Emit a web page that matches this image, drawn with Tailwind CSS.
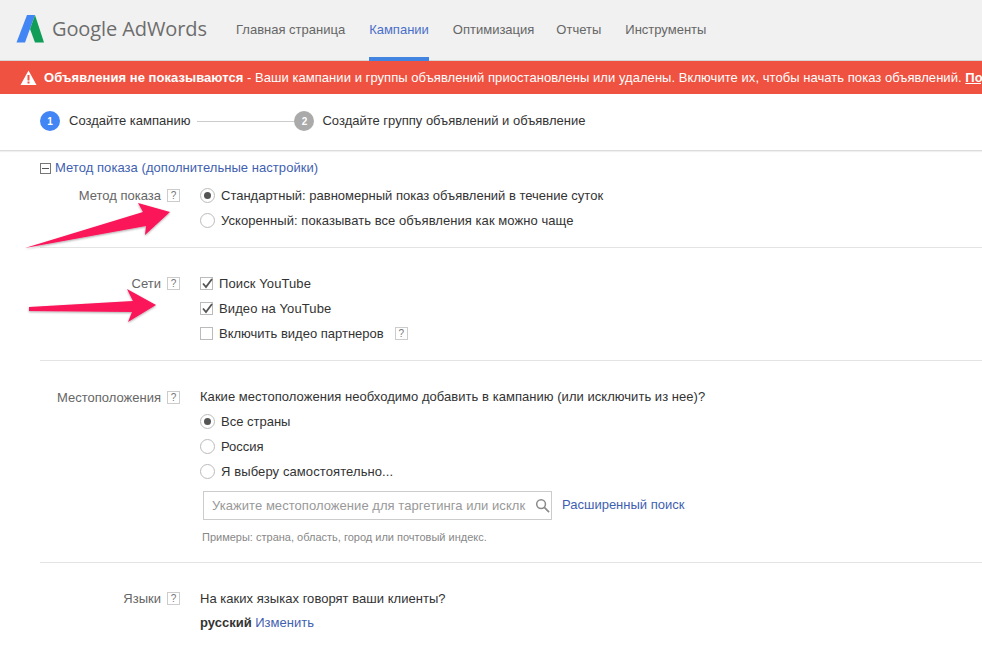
<!DOCTYPE html>
<html lang="ru">
<head>
    <meta charset="UTF-8">
    <title>Google AdWords</title>
    <script src="https://cdn.jsdelivr.net/npm/@tailwindcss/browser@4"></script>
</head>
<body class="relative bg-white w-[982px] h-[645px] overflow-hidden font-['Liberation_Sans',Arial,sans-serif] text-[13px] text-[#333]">
    <!-- Top nav -->
    <header class="h-[61px] bg-[#f1f1f1] border-b border-[#d6d6d6] flex items-stretch">
        <div class="w-[236px] flex items-center pl-[16px] pb-[2px] shrink-0">
            <svg class="w-[28px] h-[28px] shrink-0" viewBox="0 0 28 28">
                <polygon points="11,0 19,0 9,27.5 0.5,27.5" fill="#4285f4"/>
                <polygon points="19,0 28,27.5 19,27.5 14,14" fill="#0f9d58"/>
            </svg>
            <span class="ml-[8px] text-[20px] tracking-[-0.1px] text-[#6d6d6d] font-['Open_Sans',sans-serif] whitespace-nowrap">Google AdWords</span>
        </div>
        <nav class="flex gap-[24px] text-[#666]">
            <a class="pt-[20px]">Главная страница</a>
            <a class="pt-[20px] text-[#4a6fc9] border-b-[4px] border-[#4285e0] -mb-[1px]">Кампании</a>
            <a class="pt-[20px]">Оптимизация</a>
            <a class="pt-[20px] -ml-[2px]">Отчеты</a>
            <a class="pt-[20px]">Инструменты</a>
        </nav>
    </header>

    <!-- Alert -->
    <div class="h-[33px] bg-[#ef5240] text-white flex items-center pl-[20px] whitespace-nowrap overflow-hidden tracking-[0.05px]">
        <svg class="w-[17px] h-[15px] shrink-0 mr-[7px]" viewBox="0 0 17 15">
            <path d="M8.5 0.5 L16.5 15 L0.5 15 Z" fill="#fff"/>
            <rect x="7.5" y="5" width="2" height="5.5" fill="#ef5240"/>
            <rect x="7.5" y="11.5" width="2" height="2" fill="#ef5240"/>
        </svg>
        <b>Объявления не показываются</b>&nbsp;- Ваши кампании и группы объявлений приостановлены или удалены. Включите их, чтобы начать показ объявлений.&nbsp;<b class="underline">Подробнее</b>
    </div>

    <!-- Steps -->
    <div class="h-[57px] border-b border-[#ddd] shadow-[0_1px_1px_rgba(0,0,0,0.06)] flex items-center pl-[40px] pb-[2px]">
        <span class="w-[20px] h-[20px] rounded-full bg-[#4285f4] text-white text-[10px] font-bold flex items-center justify-center">1</span>
        <span class="ml-[9px]">Создайте кампанию</span>
        <span class="w-[97px] h-px bg-[#ccc] ml-[7px]"></span>
        <span class="w-[20px] h-[20px] rounded-full bg-[#aaa] text-white text-[10px] font-bold flex items-center justify-center">2</span>
        <span class="ml-[8px]">Создайте группу объявлений и объявление</span>
    </div>

    <main class="ml-[40px]">
        <!-- Delivery method -->
        <section class="border-b border-[#e3e3e3] pb-[14px]">
            <div class="h-[32px] pt-[2px] flex items-center text-[#3f5fb0]">
                <span class="w-[11px] h-[11px] border border-[#777] flex items-center justify-center mr-[4px]"><span class="w-[7px] h-px bg-[#555]"></span></span>
                <span class="tracking-[0.05px]">Метод показа (дополнительные настройки)</span>
            </div>
            <div class="flex">
                <div class="w-[140px] h-[25px] flex items-center justify-end text-[#666]">Метод показа<span class="ml-[6px] w-[13px] h-[13px] border border-[#ccc] text-[10px] text-[#777] flex items-center justify-center">?</span></div>
                <div class="ml-[20px]">
                    <label class="h-[25px] flex items-center"><span class="w-[15px] h-[15px] rounded-full border border-[#bbb] flex items-center justify-center mr-[6px]"><span class="w-[7px] h-[7px] rounded-full bg-[#555]"></span></span>Стандартный: равномерный показ объявлений в течение суток</label>
                    <label class="h-[25px] flex items-center tracking-[0.06px]"><span class="w-[15px] h-[15px] rounded-full border border-[#bbb] mr-[6px]"></span>Ускоренный: показывать все объявления как можно чаще</label>
                </div>
            </div>
        </section>

        <!-- Networks -->
        <section class="border-b border-[#e3e3e3] pt-[23px] pb-[14px] flex">
            <div class="w-[140px] h-[25px] flex items-center justify-end text-[#666]">Сети<span class="ml-[6px] w-[13px] h-[13px] border border-[#ccc] text-[10px] text-[#777] flex items-center justify-center">?</span></div>
            <div class="ml-[20px]">
                <label class="h-[25px] flex items-center tracking-[0.1px]"><span class="relative w-[13px] h-[13px] border border-[#bbb] mr-[6px]"><svg class="absolute left-0 -top-[1px] w-[13px] h-[13px]" viewBox="0 0 13 13"><path d="M2 6.5 L5 10 L11 2" fill="none" stroke="#555" stroke-width="1.8"/></svg></span>Поиск YouTube</label>
                <label class="h-[25px] flex items-center tracking-[0.1px]"><span class="relative w-[13px] h-[13px] border border-[#bbb] mr-[6px]"><svg class="absolute left-0 -top-[1px] w-[13px] h-[13px]" viewBox="0 0 13 13"><path d="M2 6.5 L5 10 L11 2" fill="none" stroke="#555" stroke-width="1.8"/></svg></span>Видео на YouTube</label>
                <label class="h-[25px] flex items-center"><span class="w-[13px] h-[13px] border border-[#bbb] mr-[6px]"></span>Включить видео партнеров<span class="ml-[11px] w-[13px] h-[13px] border border-[#ccc] text-[10px] text-[#777] flex items-center justify-center">?</span></label>
            </div>
        </section>

        <!-- Locations -->
        <section class="border-b border-[#e3e3e3] pt-[24px] pb-[16px] flex">
            <div class="w-[140px] h-[25px] flex items-center justify-end text-[#666]">Местоположения<span class="ml-[6px] w-[13px] h-[13px] border border-[#ccc] text-[10px] text-[#777] flex items-center justify-center">?</span></div>
            <div class="ml-[20px]">
                <div class="h-[24px] flex items-center tracking-[0.04px]">Какие местоположения необходимо добавить в кампанию (или исключить из нее)?</div>
                <label class="h-[25px] flex items-center"><span class="w-[15px] h-[15px] rounded-full border border-[#bbb] flex items-center justify-center mr-[6px]"><span class="w-[7px] h-[7px] rounded-full bg-[#555]"></span></span>Все страны</label>
                <label class="h-[25px] flex items-center"><span class="w-[15px] h-[15px] rounded-full border border-[#bbb] mr-[6px]"></span>Россия</label>
                <label class="h-[25px] flex items-center tracking-[0.1px]"><span class="w-[15px] h-[15px] rounded-full border border-[#bbb] mr-[6px]"></span>Я выберу самостоятельно...</label>
                <div class="mt-[7px] ml-[3px] flex items-center">
                    <div class="w-[349px] h-[29px] border border-[#ccc] flex items-center pl-[8px] pr-[1px] text-[#999]">
                        <span class="w-[322px] overflow-hidden whitespace-nowrap tracking-[0.05px]">Укажите местоположение для таргетинга или исклк</span>
                        <svg class="ml-[2px] w-[15px] h-[15px]" viewBox="0 0 16 16"><circle cx="6.5" cy="6.5" r="4.7" fill="none" stroke="#8a8a8a" stroke-width="1.6"/><path d="M10 10 L15 15" stroke="#8a8a8a" stroke-width="1.8"/></svg>
                    </div>
                    <a class="ml-[10px] -mt-[1px] text-[#3f5fb0]">Расширенный поиск</a>
                </div>
                <p class="mt-[9px] ml-[2px] text-[11px] text-[#888]">Примеры: страна, область, город или почтовый индекс.</p>
            </div>
        </section>

        <!-- Languages -->
        <section class="pt-[24px] flex">
            <div class="w-[140px] h-[24px] flex items-center justify-end text-[#666]">Языки<span class="ml-[6px] w-[13px] h-[13px] border border-[#ccc] text-[10px] text-[#777] flex items-center justify-center">?</span></div>
            <div class="ml-[20px]">
                <div class="h-[24px] flex items-center tracking-[0.03px]">На каких языках говорят ваши клиенты?</div>
                <div class="h-[24px] flex items-center"><b>русский</b>&nbsp;<a class="text-[#3f5fb0]">Изменить</a></div>
            </div>
        </section>
    </main>

    <!-- Annotation arrows -->
    <svg class="absolute left-0 top-0 pointer-events-none" width="982" height="645" viewBox="0 0 982 645">
        <defs><filter id="s" x="-10%" y="-30%" width="120%" height="160%"><feDropShadow dx="0" dy="1" stdDeviation="1" flood-color="#000" flood-opacity="0.35"/></filter></defs>
        <polygon points="25,248 143,212 138,203 170,212 145,235 146,226" fill="#fa1459" filter="url(#s)"/>
        <polygon points="29,307 133,301 127,289 156,305 128,322 132,312 29,311" fill="#fa1459" filter="url(#s)"/>
    </svg>
</body>
</html>
